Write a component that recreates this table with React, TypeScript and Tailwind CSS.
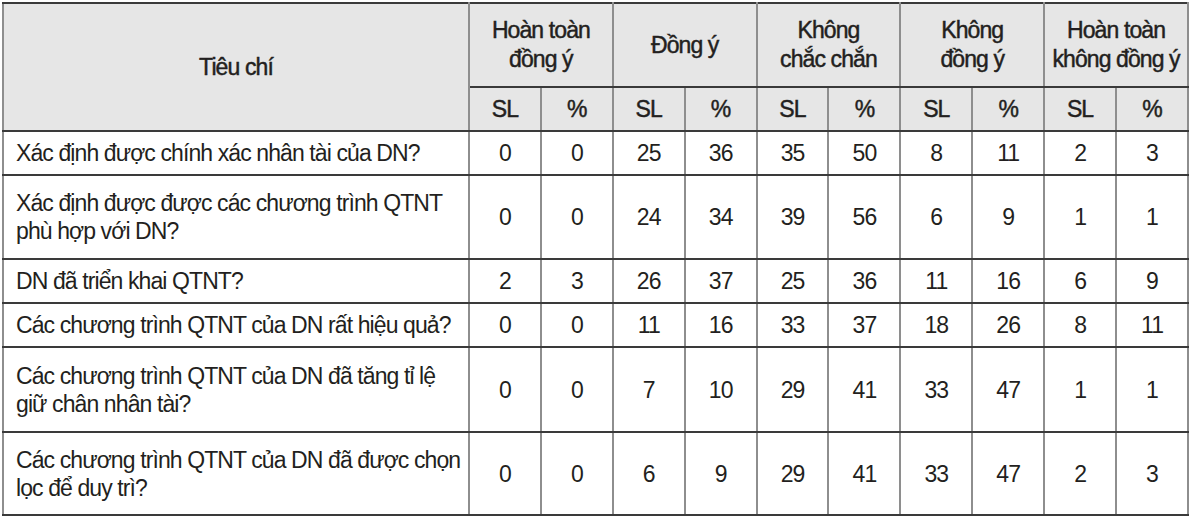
const GROUPS = [
  ['Hoàn toàn', 'đồng ý'],
  ['Đồng ý'],
  ['Không', 'chắc chắn'],
  ['Không', 'đồng ý'],
  ['Hoàn toàn', 'không đồng ý'],
];

const ROWS: { label: string[]; values: number[]; h: string }[] = [
  { label: ['Xác định được chính xác nhân tài của DN?'], values: [0, 0, 25, 36, 35, 50, 8, 11, 2, 3], h: 'h-[44px]' },
  {
    label: ['Xác định được được các chương trình QTNT', 'phù hợp với DN?'],
    values: [0, 0, 24, 34, 39, 56, 6, 9, 1, 1],
    h: 'h-[84px]',
  },
  { label: ['DN đã triển khai QTNT?'], values: [2, 3, 26, 37, 25, 36, 11, 16, 6, 9], h: 'h-[44px]' },
  { label: ['Các chương trình QTNT của DN rất hiệu quả?'], values: [0, 0, 11, 16, 33, 37, 18, 26, 8, 11], h: 'h-[44px]' },
  {
    label: ['Các chương trình QTNT của DN đã tăng tỉ lệ', 'giữ chân nhân tài?'],
    values: [0, 0, 7, 10, 29, 41, 33, 47, 1, 1],
    h: 'h-[85px]',
  },
  {
    label: ['Các chương trình QTNT của DN đã được chọn', 'lọc để duy trì?'],
    values: [0, 0, 6, 9, 29, 41, 33, 47, 2, 3],
    h: 'h-[83px]',
  },
];

const cell = 'border-x-2 border-x-[#8e8e8e] border-y-2 border-y-[#3a3a3a] p-0';
const head = 'bg-[#e6e6e6] text-center align-middle font-normal leading-[29px] [-webkit-text-stroke:0.45px_#231f20]';

export default function App() {
  return (
    <div className="min-h-screen bg-white pl-[2px] pt-[2px] font-['Liberation_Sans',Arial,sans-serif] text-[23px] leading-[28px] tracking-[-0.9px] text-[#231f20]">
      <table className="w-[1185px] table-fixed border-collapse">
        <colgroup>
          <col className="w-[466px]" />
          {Array.from({ length: 10 }).map((_, i) => (
            <col key={i} className="w-[71.9px]" />
          ))}
        </colgroup>
        <thead>
          <tr className="h-[84px]">
            <th rowSpan={2} className={`${cell} ${head}`}>
              Tiêu chí
            </th>
            {GROUPS.map((g, i) => (
              <th key={i} colSpan={2} className={`${cell} ${head} whitespace-nowrap`}>
                {g.map((line, j) => (
                  <div key={j}>{line}</div>
                ))}
              </th>
            ))}
          </tr>
          <tr className="h-[44px]">
            {GROUPS.flatMap((_, i) => [
              <th key={`sl${i}`} className={`${cell} ${head}`}>
                SL
              </th>,
              <th key={`p${i}`} className={`${cell} ${head}`}>
                %
              </th>,
            ])}
          </tr>
        </thead>
        <tbody>
          {ROWS.map((r, i) => (
            <tr key={i} className={r.h}>
              <td className={`${cell} whitespace-nowrap pl-[12px] text-left align-middle`}>
                {r.label.map((line, j) => (
                  <div key={j}>{line}</div>
                ))}
              </td>
              {r.values.map((v, j) => (
                <td key={j} className={`${cell} text-center align-middle`}>
                  {v}
                </td>
              ))}
            </tr>
          ))}
        </tbody>
      </table>
    </div>
  );
}
